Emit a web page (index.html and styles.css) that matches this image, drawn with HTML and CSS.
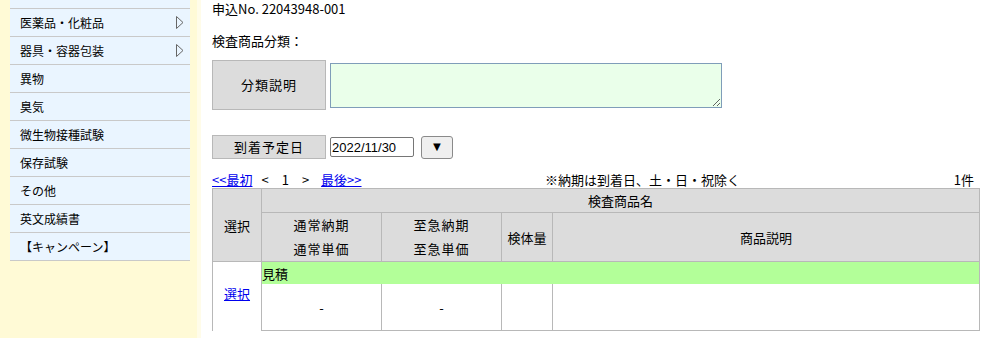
FILE: index.html
```html
<!DOCTYPE html>
<html lang="ja">
<head>
    <meta charset="UTF-8">
    <title>検査申込</title>
    <link rel="stylesheet" href="styles.css">
</head>
<body>
    <div class="page">
        <div class="side">
            <ul class="menu">
                <li class="cut"></li>
                <li>医薬品・化粧品<svg class="arrow" width="8" height="13" viewBox="0 0 8 13"><polygon points="0.5,0.5 7,6.5 0.5,12.5" fill="none" stroke="#666" stroke-width="1"/></svg></li>
                <li>器具・容器包装<svg class="arrow" width="8" height="13" viewBox="0 0 8 13"><polygon points="0.5,0.5 7,6.5 0.5,12.5" fill="none" stroke="#666" stroke-width="1"/></svg></li>
                <li>異物</li>
                <li>臭気</li>
                <li>微生物接種試験</li>
                <li>保存試験</li>
                <li>その他</li>
                <li>英文成績書</li>
                <li>【キャンペーン】</li>
            </ul>
        </div>

        <div class="main">
            <p class="order-no">申込No. 22043948-001</p>
            <p class="cat-label">検査商品分類：</p>

            <div class="desc-row">
                <div class="label-box tall">分類説明</div>
                <textarea class="desc"></textarea>
            </div>

            <div class="date-row">
                <div class="label-box">到着予定日</div>
                <input class="date" type="text" value="2022/11/30">
                <button class="drop">▼</button>
            </div>

            <div class="pager">
                <div class="nav">
                    <a href="#">&lt;&lt;最初</a>
                    <span class="arr first">&lt;</span>
                    <span class="arr">1</span>
                    <span class="arr">&gt;</span>
                    <a class="last" href="#">最後&gt;&gt;</a>
                </div>
                <div class="note">※納期は到着日、土・日・祝除く</div>
                <div class="count">1件</div>
            </div>

            <table class="items">
                <colgroup>
                    <col style="width:49px">
                    <col style="width:120px">
                    <col style="width:120px">
                    <col style="width:51px">
                    <col>
                </colgroup>
                <thead>
                    <tr class="h1">
                        <th rowspan="2">選択</th>
                        <th colspan="4">検査商品名</th>
                    </tr>
                    <tr class="h2">
                        <th class="sp">通常納期<br>通常単価</th>
                        <th class="sp">至急納期<br>至急単価</th>
                        <th>検体量</th>
                        <th>商品説明</th>
                    </tr>
                </thead>
                <tbody>
                    <tr class="group">
                        <td rowspan="2" class="pick"><a href="#">選択</a></td>
                        <td colspan="4">見積</td>
                    </tr>
                    <tr class="data">
                        <td>-</td>
                        <td>-</td>
                        <td></td>
                        <td></td>
                    </tr>
                </tbody>
            </table>
        </div>
    </div>
</body>
</html>
```

FILE: styles.css
```css
body { margin: 0; font-family: "Noto Sans CJK JP", "DejaVu Sans", sans-serif; font-size: 13px; color: #000; background: #fff; }
.page { display: flex; height: 338px; overflow: hidden; }

.side { width: 197px; flex-shrink: 0; background: #fffad6; border-right: 4px solid #fffce9; }
.menu { list-style: none; margin: -19px 0 0 10px; padding: 0; width: 180px; }
.menu li { display: flex; align-items: center; justify-content: space-between; height: 27px; padding: 0 6px 0 10px; background: #eaf5ff; border-bottom: 1px solid #c9c9c9; font-size: 12px; }
.arrow { display: block; }

.main { padding-left: 11px; }
.main p { margin: 0; }
.order-no { line-height: 17px; }
.cat-label { margin-top: 16px !important; line-height: 16px; }

.label-box { width: 112px; height: 22px; line-height: 22px; text-align: center; background: #dcdcdc; border: 1px solid #b8b8b8; letter-spacing: 1px; }
.label-box.tall { height: 48px; line-height: 48px; }

.desc-row { display: flex; align-items: center; margin-top: 11px; }
.desc { width: 390px; height: 43px; margin: 0 0 0 4px; padding: 0; background: #eaffea; border: 1px solid #7f9db9; font: inherit; }

.date-row { display: flex; align-items: center; margin-top: 25px; }
.date { width: 80px; height: 18px; margin: 0 0 0 4px; padding: 0 1px; border: 1px solid #767676; border-radius: 2px; font-family: "Liberation Sans", Arial, sans-serif; font-size: 13px; }
.drop { width: 32px; height: 23px; margin-left: 7px; padding: 0; background: #efefef; border: 1px solid #8a8a8a; border-radius: 3px; font-size: 13px; line-height: 20px; }

.pager { display: flex; width: 762px; margin-top: 12px; line-height: 17px; }
.nav { display: flex; width: 333px; }
.nav a { color: #0000ee; }
.arr { margin-left: 13px; }
.arr.first { margin-left: 9px; }
.last { margin-left: 12px; }
.note { flex: 1; }

.items { width: 768px; table-layout: fixed; border-collapse: collapse; }
.items th, .items td { border: 1px solid #b8b8b8; padding: 0; font-weight: normal; text-align: center; }
.items th { background: #dcdcdc; }
.h1 th { height: 23px; }
.h2 th { height: 46px; }
.h2 th.sp { line-height: 24px; letter-spacing: 1px; }
.group td { height: 22px; background: #b3ff99; text-align: left; border-bottom: none; }
.group td.pick { background: #fff; text-align: center; padding-bottom: 6px; }
.pick a { color: #0000ee; }
.data td { height: 46px; border-top: none; }
```
